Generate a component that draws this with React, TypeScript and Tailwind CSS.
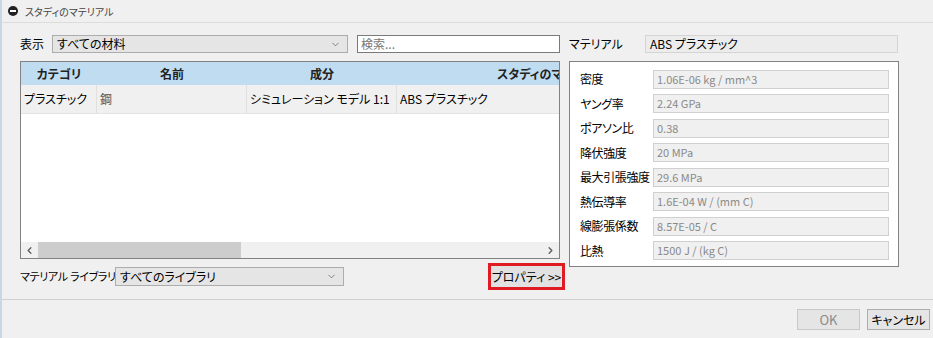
import { ChevronDown, ChevronLeft, ChevronRight } from 'lucide-react'

const cols = [
  { label: 'カテゴリ', w: 'w-[76px]', value: 'プラスチック' },
  { label: '名前', w: 'w-[150px]', value: '鋼' },
  { label: '成分', w: 'w-[150px]', value: 'シミュレーション モデル 1:1' },
  { label: 'スタディのマテリアル', w: 'w-[162px]', value: 'ABS プラスチック' },
]

const props = [
  ['密度', '1.06E-06 kg / mm^3'],
  ['ヤング率', '2.24 GPa'],
  ['ポアソン比', '0.38'],
  ['降伏強度', '20 MPa'],
  ['最大引張強度', '29.6 MPa'],
  ['熱伝導率', '1.6E-04 W / (mm C)'],
  ['線膨張係数', '8.57E-05 / C'],
  ['比熱', '1500 J / (kg C)'],
]

const font = "font-['Noto_Sans_CJK_JP','Noto_Sans',sans-serif] [font-feature-settings:'palt']"

const App = () => {
  return (
    <div className={`w-[933px] h-[338px] bg-[#f0f0f0] text-[12px] text-black overflow-hidden border-l-2 border-[#c9d6e6] ${font}`}>
      {/* Title */}
      <div className="h-[23px] flex items-center pl-[6px] gap-[7px] border-b border-[#dcdcdc]">
        <div className="w-[10px] h-[10px] rounded-full bg-[#222] flex items-center justify-center">
          <div className="w-[6px] h-[2px] bg-white" />
        </div>
        <span className="text-[10px] text-[#444]">スタディのマテリアル</span>
      </div>

      <div className="flex pl-[18px] pt-[12px] gap-[4px] h-[277px] border-b border-[#d0d0d0]">
        {/* Left column */}
        <div className="w-[545px] flex flex-col">
          <div className="flex items-center h-[18px]">
            <span className="w-[32px] leading-none">表示</span>
            <div className="w-[296px] h-[18px] bg-[#e5e5e5] border border-[#adadad] flex items-center pl-[4px] pr-[6px]">
              <span className="flex-1 leading-none">すべての材料</span>
              <ChevronDown size={11} strokeWidth={1.5} className="text-[#555]" />
            </div>
            <div className="ml-[9px] w-[203px] h-[18px] bg-white border border-[#7a7a7a] flex items-center px-[3px] text-[#777] leading-none">
              検索...
            </div>
          </div>

          {/* Table */}
          <div className="mt-[8px] w-[540px] h-[198px] bg-white border border-[#828282] flex flex-col overflow-hidden">
            <div className="flex h-[23px] bg-[#bfdcf1] font-bold text-[#222] whitespace-nowrap">
              {cols.map((c, i) => (
                <div key={c.label} className={`${c.w} shrink-0 flex items-center overflow-hidden ${i === 3 ? 'pl-[100px]' : 'justify-center'}`}>
                  {i === 3 ? 'スタディのマテ' : c.label}
                </div>
              ))}
            </div>
            <div className="flex h-[29px] bg-[#f0f0f0] border-b border-[#e4e4e4] whitespace-nowrap">
              {cols.map((c, i) => (
                <div key={c.label} className={`${c.w} shrink-0 flex items-center pl-[3px] overflow-hidden ${i < 3 ? 'border-r border-[#e0e0e0]' : ''} ${i === 1 ? 'text-[#555]' : ''}`}>
                  {c.value}
                </div>
              ))}
            </div>
            <div className="flex-1" />
            <div className="h-[16px] bg-[#f0f0f0] flex items-center">
              <ChevronLeft size={11} strokeWidth={3} className="mx-[3px] text-[#606060]" />
              <div className="w-[203px] h-[16px] bg-[#cdcdcd]" />
              <div className="flex-1" />
              <ChevronRight size={11} strokeWidth={3} className="mx-[3px] text-[#606060]" />
            </div>
          </div>

          {/* Bottom row */}
          <div className="mt-[4px] flex items-center h-[27px]">
            <span className="w-[95px] leading-none whitespace-nowrap text-[11px] tracking-[-0.3px]">マテリアル ライブラリ</span>
            <div className="w-[229px] h-[19px] bg-[#e5e5e5] border border-[#adadad] flex items-center pl-[4px] pr-[6px]">
              <span className="flex-1 leading-none">すべてのライブラリ</span>
              <ChevronDown size={11} strokeWidth={1.5} className="text-[#555]" />
            </div>
            <div className="flex-1" />
            <div className="w-[77px] h-[27px] border-[3px] border-[#e01b24] bg-[#e1e1e1] flex items-center justify-center leading-none whitespace-nowrap">
              プロパティ &gt;&gt;
            </div>
          </div>
        </div>

        {/* Right column */}
        <div className="w-[330px] flex flex-col">
          <div className="flex items-center h-[18px]">
            <span className="w-[76px] leading-none">マテリアル</span>
            <div className="w-[253px] h-[18px] bg-[#ececec] border border-[#d4d4d4] flex items-center px-[4px] leading-none">
              ABS プラスチック
            </div>
          </div>
          <div className="mt-[8px] w-[330px] h-[206px] bg-white border border-[#828282] pl-[10px] pt-[8px] flex flex-col gap-[6px]">
            {props.map(([k, v]) => (
              <div key={k} className="flex items-center h-[18.5px]">
                <span className="w-[73px] whitespace-nowrap leading-none tracking-[-0.4px]">{k}</span>
                <div className="w-[236px] h-[19px] bg-[#f0f0f0] border border-[#d0d0d0] flex items-center px-[3px] text-[11px] text-[#8a8a8a] leading-none">
                  {v}
                </div>
              </div>
            ))}
          </div>
        </div>
      </div>

      {/* Footer */}
      <div className="flex justify-end gap-[7px] pr-[3px] pt-[9px]">
        <div className="w-[63px] h-[21px] bg-[#e5e5e5] border border-[#c8c8c8] flex items-center justify-center text-[#8a8a8a] text-[13px] leading-none">
          OK
        </div>
        <div className="w-[63px] h-[21px] bg-[#e5e5e5] border border-[#adadad] flex items-center justify-center leading-none">
          キャンセル
        </div>
      </div>
    </div>
  )
}

export default App
